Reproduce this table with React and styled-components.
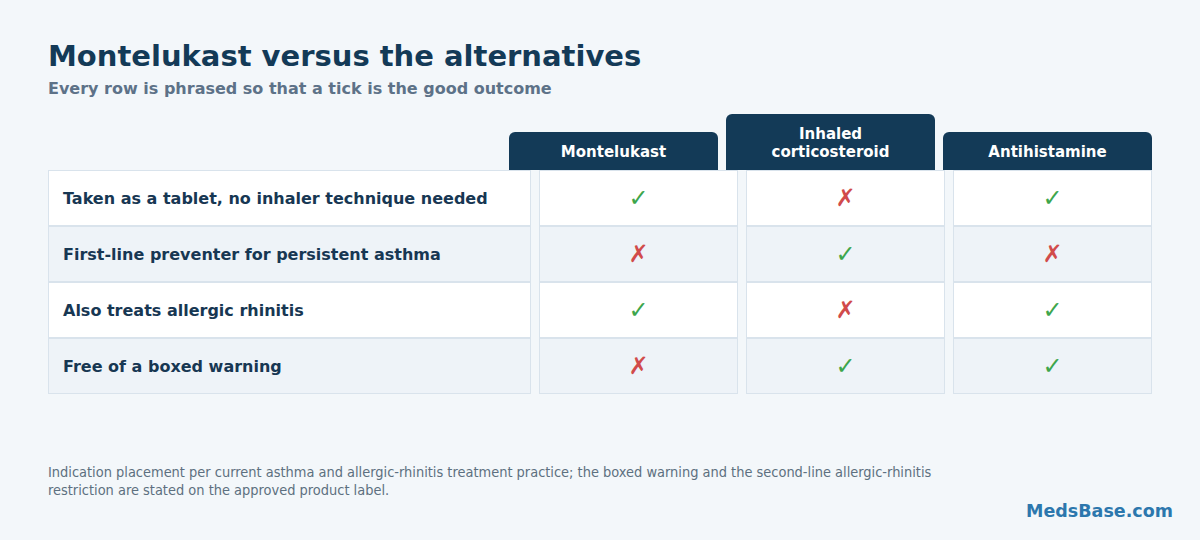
import styled, { createGlobalStyle } from 'styled-components';

const GlobalStyle = createGlobalStyle`
	html, body {
		margin: 0;
		padding: 0;
		background: #f3f7fa;
	}
	body {
		font-family: 'DejaVu Sans', 'Liberation Sans', sans-serif;
	}
`;

const Page = styled.div`
	width: 1200px;
	height: 540px;
	box-sizing: border-box;
	padding: 38px 48px 0 48px;
	display: flex;
	flex-direction: column;
	position: relative;
`;
const Title = styled.h1`
	margin: 0;
	font-size: 29px;
	line-height: 36px;
	font-weight: bold;
	color: #133a57;
`;
const Subtitle = styled.div`
	margin-top: 5px;
	font-size: 16px;
	line-height: 20px;
	font-weight: bold;
	color: #5d7288;
`;
const HeadRow = styled.div`
	margin-top: 15px;
	display: flex;
	justify-content: flex-end;
	align-items: flex-end;
	gap: 8px;
	height: 56px;
`;
const Head = styled.div`
	width: 209px;
	height: ${({ tall }) => (tall ? 56 : 38)}px;
	box-sizing: border-box;
	background: #133a57;
	border-radius: 6px 6px 0 0;
	color: #ffffff;
	font-size: 15px;
	line-height: 18px;
	font-weight: bold;
	text-align: center;
	display: flex;
	align-items: center;
	justify-content: center;
	padding-top: 1px;
`;
const Table = styled.div`
	display: flex;
	flex-direction: column;
`;
const Row = styled.div`
	display: flex;
	gap: 8px;
	height: 56px;
`;
const Cell = styled.div`
	box-sizing: border-box;
	border: 1px solid #d9e3ec;
	background: ${({ alt }) => (alt ? '#eef3f8' : '#ffffff')};
	display: flex;
	align-items: center;
`;
const Label = styled(Cell)`
	width: 483px;
	padding-left: 14px;
	font-size: 16px;
	font-weight: bold;
	color: #173753;
`;
const Mark = styled(Cell)`
	width: 199px;
	justify-content: center;
	font-size: 24px;
	color: ${({ ok }) => (ok ? '#3da64c' : '#d14b4b')};
`;
const Foot = styled.div`
	margin-top: auto;
	margin-bottom: 41px;
	width: 940px;
	font-family: 'DejaVu Sans Condensed', 'DejaVu Sans', sans-serif;
	font-size: 14.45px;
	line-height: 18px;
	color: #5d7080;
`;
const Brand = styled.div`
	position: absolute;
	right: 27px;
	bottom: 19px;
	font-size: 17.5px;
	font-weight: bold;
	color: #2c77ad;
`;

const rows = [
	['Taken as a tablet, no inhaler technique needed', [true, false, true]],
	['First-line preventer for persistent asthma', [false, true, false]],
	['Also treats allergic rhinitis', [true, false, true]],
	['Free of a boxed warning', [false, true, true]],
];

const App = () => (
	<>
		<GlobalStyle />
		<Page>
			<Title>Montelukast versus the alternatives</Title>
			<Subtitle>Every row is phrased so that a tick is the good outcome</Subtitle>
			<HeadRow>
				<Head>Montelukast</Head>
				<Head tall>Inhaled<br />corticosteroid</Head>
				<Head>Antihistamine</Head>
			</HeadRow>
			<Table>
				{rows.map(([label, marks], i) => (
					<Row key={i}>
						<Label alt={i % 2 === 1}>{label}</Label>
						{marks.map((ok, j) => (
							<Mark key={j} alt={i % 2 === 1} ok={ok}>{ok ? '✓' : '✗'}</Mark>
						))}
					</Row>
				))}
			</Table>
			<Foot>
				Indication placement per current asthma and allergic-rhinitis treatment practice; the boxed warning and the second-line allergic-rhinitis restriction are stated on the approved product label.
			</Foot>
			<Brand>MedsBase.com</Brand>
		</Page>
	</>
);

export default App;
